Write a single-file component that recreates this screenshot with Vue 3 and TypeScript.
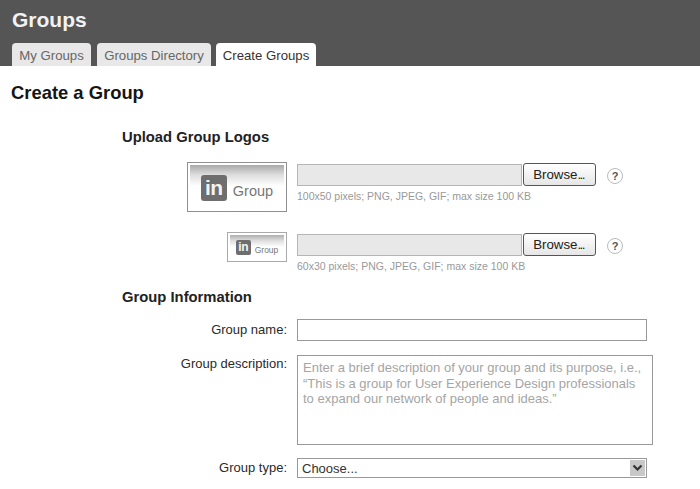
<script setup lang="ts">
const uploads = [
  { cls: 'large', hint: '100x50 pixels; PNG, JPEG, GIF; max size 100 KB' },
  { cls: 'small', hint: '60x30 pixels; PNG, JPEG, GIF; max size 100 KB' },
]
const placeholder = 'Enter a brief description of your group and its purpose, i.e.,\n“This is a group for User Experience Design professionals\nto expand our network of people and ideas.”'
</script>

<template>
  <div class="page">
    <header class="top">
      <h1>Groups</h1>
      <nav class="tabs">
        <span class="tab">My Groups</span>
        <span class="tab">Groups Directory</span>
        <span class="tab active">Create Groups</span>
      </nav>
    </header>
    <main class="main">
      <h2>Create a Group</h2>
      <section class="form">
        <h3 class="first">Upload Group Logos</h3>
        <div v-for="u in uploads" :key="u.cls" class="upload" :class="u.cls">
          <div class="logo-cell">
            <div class="logo">
              <span class="in">in</span>
              <span class="word">Group</span>
            </div>
          </div>
          <div class="file-cell">
            <div class="file-line">
              <span class="file"></span>
              <span class="browse">Browse<span class="dots">...</span></span>
              <span class="help">?</span>
            </div>
            <p class="hint">{{ u.hint }}</p>
          </div>
        </div>
        <h3 class="second">Group Information</h3>
        <div class="row name-row">
          <label>Group name:</label>
          <div class="box name"></div>
        </div>
        <div class="row desc-row">
          <label>Group description:</label>
          <div class="box desc">{{ placeholder }}</div>
        </div>
        <div class="row type-row">
          <label>Group type:</label>
          <div class="box type">
            <span>Choose...</span>
            <span class="arrow">
              <svg width="11" height="8" viewBox="0 0 11 8"><path d="M1.5 1.5 5.5 5.5 9.5 1.5" fill="none" stroke="#333" stroke-width="2.2"/></svg>
            </span>
          </div>
        </div>
      </section>
    </main>
  </div>
</template>

<style>
html, body { margin: 0; background: #fff; overflow: hidden; }
</style>

<style scoped>
.page {
  width: 700px;
  height: 489px;
  overflow: hidden;
  font-family: "Liberation Sans", Arial, sans-serif;
  color: #222;
}
.top {
  height: 66px;
  box-sizing: border-box;
  background: #555;
  padding: 8px 11px 0 12px;
  display: flex;
  flex-direction: column;
  justify-content: space-between;
}
h1 {
  margin: 0;
  font-size: 21px;
  line-height: 24px;
  font-weight: 700;
  color: #f2f2f2;
}
.tabs { display: flex; gap: 6px; }
.tab {
  width: 79px;
  height: 23px;
  box-sizing: border-box;
  text-align: center;
  line-height: 26px;
  font-size: 13.2px;
  white-space: nowrap;
  color: #666;
  background: #e8e8e8;
  border-radius: 4px 4px 0 0;
}
.tab:nth-child(2) { width: 114px; }
.tab:nth-child(3) { width: 100px; margin-left: -1px; }
.tab.active { background: #fff; color: #333; }
.main { padding: 0 0 0 11px; }
h2 {
  margin: 0;
  padding-top: 17px;
  font-size: 18.4px;
  line-height: 20px;
  font-weight: 700;
  color: #151515;
}
.form { padding-left: 111px; }
h3 {
  margin: 0;
  font-size: 14.8px;
  line-height: 18px;
  font-weight: 700;
  color: #222;
}
h3.first { padding-top: 25px; }
h3.second { padding-top: 18px; }
.upload { display: flex; margin-left: 0; }
.logo-cell { width: 165px; display: flex; justify-content: flex-end; flex: none; }
.upload.large { padding-top: 16px; height: 54px; }
.upload.small { padding-top: 16px; height: 38px; }
.logo {
  box-sizing: border-box;
  border: 1px solid #8f8f8f;
  box-shadow: inset 0 0 0 2px #fff;
  display: flex;
  align-items: center;
  justify-content: center;
}
.large .logo {
  width: 100px;
  height: 50px;
  gap: 6px;
  padding-top: 1px;
  background: linear-gradient(#a9a9a9 2px, #dedede 12px, #fff 23px);
}
.small .logo {
  width: 60px;
  height: 30px;
  gap: 4px;
  padding-top: 1px;
  border-color: #aaa;
  background: linear-gradient(#b0b0b0 2px, #e0e0e0 8px, #fff 14px);
}
.in {
  background: #6e6e6e;
  color: #f4f4f4;
  font-weight: 700;
  text-align: center;
  display: block;
}
.large .in { width: 26px; height: 26px; border-radius: 3px; font-size: 21px; line-height: 26px; letter-spacing: -0.5px; }
.small .in { width: 15px; height: 15px; border-radius: 2px; font-size: 12px; line-height: 15px; letter-spacing: -0.3px; }
.word { color: #777; }
.large .word { font-size: 14.5px; margin-top: 6px; }
.small .word { font-size: 8.5px; margin-top: 4px; }
.file-cell { margin-left: 10px; }
.file-line { display: flex; align-items: center; height: 23px; margin-top: 1px; }
.file {
  width: 225px;
  height: 22px;
  box-sizing: border-box;
  background: #e8e8e8;
  border: 1px solid #b5b5b5;
}
.browse {
  width: 73px;
  height: 23px;
  box-sizing: border-box;
  margin-left: 1px;
  border: 1px solid #555;
  border-radius: 3px;
  background: linear-gradient(#fff, #e6e6e6);
  text-align: center;
  font-size: 13.3px;
  line-height: 21px;
  color: #222;
}
.dots { letter-spacing: -1.6px; margin-right: 2px; }
.help {
  width: 16px;
  height: 16px;
  box-sizing: border-box;
  margin-left: 11px;
  margin-top: 2px;
  border: 1px solid #bbb;
  border-radius: 50%;
  text-align: center;
  font-size: 11px;
  font-weight: 700;
  line-height: 14px;
  color: #555;
}
.hint {
  margin: 4px 0 0;
  font-size: 10.5px;
  line-height: 13px;
  color: #999;
}
.row { display: flex; }
label {
  width: 165px;
  flex: none;
  text-align: right;
  font-size: 13px;
  line-height: 16px;
  color: #2a2a2a;
}
.box {
  margin-left: 10px;
  box-sizing: border-box;
  border: 1px solid #999;
  background: #fff;
}
.name-row { margin-top: 13px; align-items: center; }
.name { width: 350px; height: 22px; }
.desc-row { margin-top: 14px; }
.desc-row label { padding-top: 1px; }
.desc {
  width: 356px;
  height: 90px;
  padding: 4px 5px;
  white-space: pre;
  font-size: 13px;
  line-height: 15.5px;
  color: #a5a5a5;
}
.type-row { margin-top: 13px; align-items: center; }
.type {
  width: 350px;
  height: 20px;
  padding: 0 1px 0 4px;
  display: flex;
  justify-content: space-between;
  align-items: center;
  font-size: 13px;
  color: #333;
}
.arrow {
  width: 15px;
  height: 16px;
  background: #c8c8c8;
  display: flex;
  align-items: center;
  justify-content: center;
}
</style>
